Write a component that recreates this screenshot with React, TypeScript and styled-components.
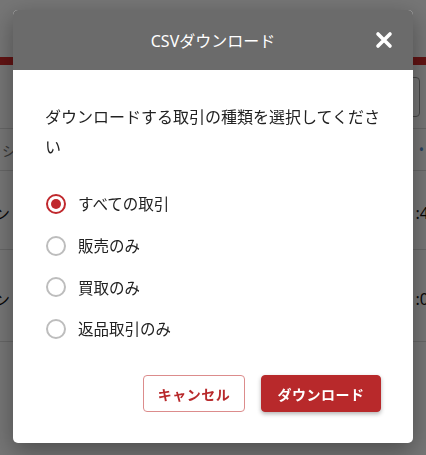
import React, { useState } from "react";
import styled, { createGlobalStyle } from "styled-components";

const Global = createGlobalStyle`
  html, body { margin: 0; padding: 0; }
  body {
    font-family: "Noto Sans", "Noto Sans CJK JP", sans-serif;
    background: #ffffff;
    width: 426px;
    height: 455px;
    overflow: hidden;
  }
  * { box-sizing: border-box; }
`;

const Page = styled.div`
  width: 426px;
  height: 455px;
  display: flex;
  flex-direction: column;
  background: #fff;
  overflow: hidden;
`;

const PageHeader = styled.div`
  height: 65px;
  background: #fff;
  border-bottom: 8px solid #d42a2a;
  flex: none;
`;

const Toolbar = styled.div`
  height: 64px;
  flex: none;
  display: flex;
  justify-content: flex-end;
  align-items: center;
  padding: 0 6px 0 0;
  border-bottom: 1px solid #ddd;
`;

const SearchBox = styled.div`
  width: 200px;
  height: 40px;
  border: 1px solid #999;
  border-radius: 4px;
`;

const TableHead = styled.div`
  height: 42px;
  flex: none;
  display: flex;
  align-items: center;
  justify-content: space-between;
  border-bottom: 1px solid #ddd;
  color: #777;
  font-size: 14px;
  padding: 0 2px;
`;

const Row = styled.div<{ $h: number }>`
  height: ${(p) => p.$h}px;
  flex: none;
  display: flex;
  align-items: center;
  justify-content: space-between;
  border-bottom: 1px solid #ddd;
  font-size: 16px;
  color: #111;
  padding-top: 6px;
  margin: 0 -12px 0 -6px;
`;

const Overlay = styled.div`
  position: fixed;
  inset: 0;
  background: rgba(0, 0, 0, 0.54);
  display: flex;
  justify-content: center;
  padding-top: 10px;
`;

const Modal = styled.div`
  width: 400px;
  height: 433px;
  background: #fff;
  border-radius: 5px;
  overflow: hidden;
  display: flex;
  flex-direction: column;
  box-shadow: 0 8px 24px rgba(0, 0, 0, 0.35);
`;

const ModalHeader = styled.div`
  height: 60px;
  flex: none;
  background: #6b6b6b;
  color: #fff;
  display: flex;
  align-items: center;
  justify-content: center;
  position: relative;
  font-size: 16px;
  font-weight: 400;
`;

const Close = styled.button`
  position: absolute;
  right: 20px;
  top: 21px;
  width: 18px;
  height: 18px;
  padding: 0;
  border: none;
  background: none;
  cursor: pointer;
  display: flex;
`;

const Body = styled.div`
  flex: 1;
  padding: 32px 32px 31px;
  display: flex;
  flex-direction: column;
`;

const Prompt = styled.p`
  margin: 0;
  font-size: 16px;
  line-height: 30px;
  color: #222;
`;

const Options = styled.div`
  margin-top: 21px;
  display: flex;
  flex-direction: column;
`;

const Option = styled.label`
  height: 41.7px;
  display: flex;
  align-items: center;
  gap: 12px;
  font-size: 15.5px;
  color: #222;
  cursor: pointer;
  padding-left: 1px;
`;

const Radio = styled.span<{ $on: boolean }>`
  width: 20px;
  height: 20px;
  border-radius: 50%;
  border: 2px solid ${(p) => (p.$on ? "#c0282d" : "#bdbdbd")};
  display: flex;
  align-items: center;
  justify-content: center;
  flex: none;
  &::after {
    content: "";
    width: 10px;
    height: 10px;
    border-radius: 50%;
    background: ${(p) => (p.$on ? "#c0282d" : "transparent")};
  }
`;

const Actions = styled.div`
  margin-top: auto;
  display: flex;
  justify-content: flex-end;
  gap: 16px;
`;

const Button = styled.button<{ $primary?: boolean }>`
  height: 37px;
  min-width: ${(p) => (p.$primary ? 120 : 102)}px;
  border-radius: 4px;
  font-family: "Noto Sans", "Noto Sans CJK JP", sans-serif;
  font-size: 14px;
  font-weight: 700;
  letter-spacing: 0.5px;
  cursor: pointer;
  border: 1px solid ${(p) => (p.$primary ? "#b8292b" : "#dc8c8c")};
  background: ${(p) => (p.$primary ? "#b8292b" : "#fff")};
  color: ${(p) => (p.$primary ? "#fff" : "#b8292b")};
  box-shadow: ${(p) => (p.$primary ? "0 2px 4px rgba(0,0,0,0.3)" : "none")};
`;

const opts = ["すべての取引", "販売のみ", "買取のみ", "返品取引のみ"];

export default function App() {
  const [sel, setSel] = useState(0);
  return (
    <>
      <Global />
      <Page>
        <PageHeader />
        <Toolbar>
          <SearchBox />
        </Toolbar>
        <TableHead>
          <span>シ</span>
          <span style={{ color: "#5b8fd0" }}>•</span>
        </TableHead>
        <Row $h={79}>
          <span>ン</span>
          <span>:44</span>
        </Row>
        <Row $h={92}>
          <span>ン</span>
          <span>:02</span>
        </Row>
      </Page>
      <Overlay>
        <Modal>
          <ModalHeader>
            CSVダウンロード
            <Close aria-label="close">
              <svg width="18" height="18" viewBox="0 0 18 18">
                <path d="M3 3 L15 15 M15 3 L3 15" stroke="#fff" strokeWidth="3.6" strokeLinecap="round" />
              </svg>
            </Close>
          </ModalHeader>
          <Body>
            <Prompt>ダウンロードする取引の種類を選択してください</Prompt>
            <Options>
              {opts.map((o, i) => (
                <Option key={o} onClick={() => setSel(i)}>
                  <Radio $on={sel === i} />
                  {o}
                </Option>
              ))}
            </Options>
            <Actions>
              <Button>キャンセル</Button>
              <Button $primary>ダウンロード</Button>
            </Actions>
          </Body>
        </Modal>
      </Overlay>
    </>
  );
}
